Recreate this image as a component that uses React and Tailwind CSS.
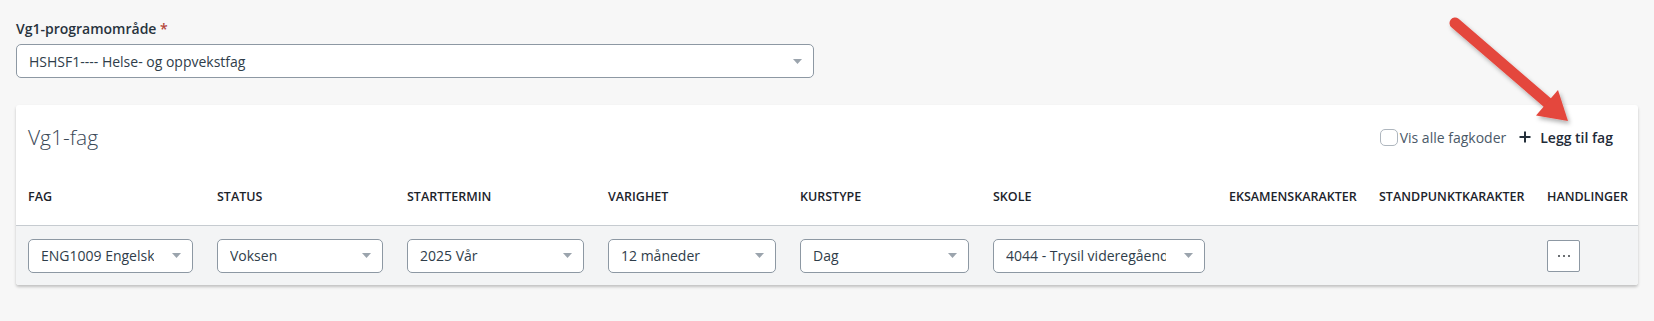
import React from "react";

function Caret() {
  return (
    <svg width="9" height="5" viewBox="0 0 9 5" className="shrink-0">
      <polygon points="0,0 9,0 4.5,5" fill="#9ba4ad" />
    </svg>
  );
}

function Select({ value, className = "" }) {
  return (
    <div
      className={
        "flex items-center h-[34px] bg-white border border-[#8d98a3] rounded-[5px] pl-3 pr-[11px] " +
        className
      }
    >
      <span className="flex-1 min-w-0 overflow-hidden whitespace-nowrap text-[14px] text-[#2f3d4a] mr-[18px]">
        {value}
      </span>
      <Caret />
    </div>
  );
}

const cols =
  "grid grid-cols-[189px_190px_201px_192px_193px_236px_150px_168px_103px]";

const headers = [
  "FAG",
  "STATUS",
  "STARTTERMIN",
  "VARIGHET",
  "KURSTYPE",
  "SKOLE",
  "EKSAMENSKARAKTER",
  "STANDPUNKTKARAKTER",
  "HANDLINGER",
];

export default function App() {
  return (
    <div className="relative w-[1654px] h-[321px] bg-[#f7f7f7] px-4 pt-[19px] font-['Open_Sans',sans-serif] overflow-hidden">
      <label className="block text-[14px] leading-5 font-semibold text-[#28333d]">
        Vg1-programområde <span className="text-[#b4463b]">*</span>
      </label>
      <Select
        value="HSHSF1---- Helse- og oppvekstfag"
        className="mt-[5px] w-[798px]"
      />

      <div className="mt-[27px] bg-white rounded-[3px] shadow-[0_2px_3px_rgba(0,0,0,0.22)]">
        <div className="flex items-center justify-between h-[30px] pt-[17px] box-content pl-3 pr-[25px]">
          <h2 className="text-[21px] leading-[30px] font-light text-[#3a4856]">
            Vg1-fag
          </h2>
          <div className="flex items-center">
            <span className="w-[18px] h-[17px] rounded-[5px] border border-[#aeb6be] bg-white" />
            <span className="ml-[2px] text-[14px] text-[#4a5968]">
              Vis alle fagkoder
            </span>
            <svg
              width="12"
              height="12"
              viewBox="0 0 12 12"
              className="ml-[13px]"
            >
              <path d="M6 0.5V11.5M0.5 6H11.5" stroke="#25303b" strokeWidth="2" />
            </svg>
            <span className="ml-[9px] text-[14px] font-semibold text-[#1f2b38]">
              Legg til fag
            </span>
          </div>
        </div>

        <div
          className={
            cols +
            " mt-[18px] h-[56px] items-center border-b border-[#c6cbd0]"
          }
        >
          {headers.map((h) => (
            <div
              key={h}
              className="px-3 text-[12.5px] font-semibold text-[#1c232b] whitespace-nowrap"
            >
              {h}
            </div>
          ))}
        </div>

        <div className={cols + " h-[59px] items-center bg-[#f3f4f5] rounded-b-[3px]"}>
          <div className="px-3">
            <Select value="ENG1009 Engelsk" />
          </div>
          <div className="px-3">
            <Select value="Voksen" />
          </div>
          <div className="px-3">
            <Select value="2025 Vår" />
          </div>
          <div className="px-3">
            <Select value="12 måneder" />
          </div>
          <div className="px-3">
            <Select value="Dag" />
          </div>
          <div className="px-3">
            <Select value="4044 - Trysil videregående skole" />
          </div>
          <div />
          <div />
          <div className="px-3">
            <button className="w-[33px] h-[32px] bg-white border border-[#8d98a3] rounded-[2px] flex items-center justify-center gap-[3px]">
              <span className="w-[2px] h-[2px] rounded-full bg-[#3a3f45]" />
              <span className="w-[2px] h-[2px] rounded-full bg-[#3a3f45]" />
              <span className="w-[2px] h-[2px] rounded-full bg-[#3a3f45]" />
            </button>
          </div>
        </div>
      </div>

      <svg
        className="absolute left-[1440px] top-[10px]"
        width="150"
        height="125"
        viewBox="0 0 150 125"
      >
        <defs>
          <filter id="sh" x="-20%" y="-20%" width="140%" height="140%">
            <feDropShadow dx="2" dy="3" stdDeviation="2" floodColor="#000" floodOpacity="0.3" />
          </filter>
        </defs>
        <g filter="url(#sh)">
          <line
            x1="15"
            y1="13"
            x2="109"
            y2="94"
            stroke="#e4463c"
            strokeWidth="11"
            strokeLinecap="round"
          />
          <polygon points="96,105.5 118,80 128,111" fill="#e4463c" />
        </g>
      </svg>
    </div>
  );
}
